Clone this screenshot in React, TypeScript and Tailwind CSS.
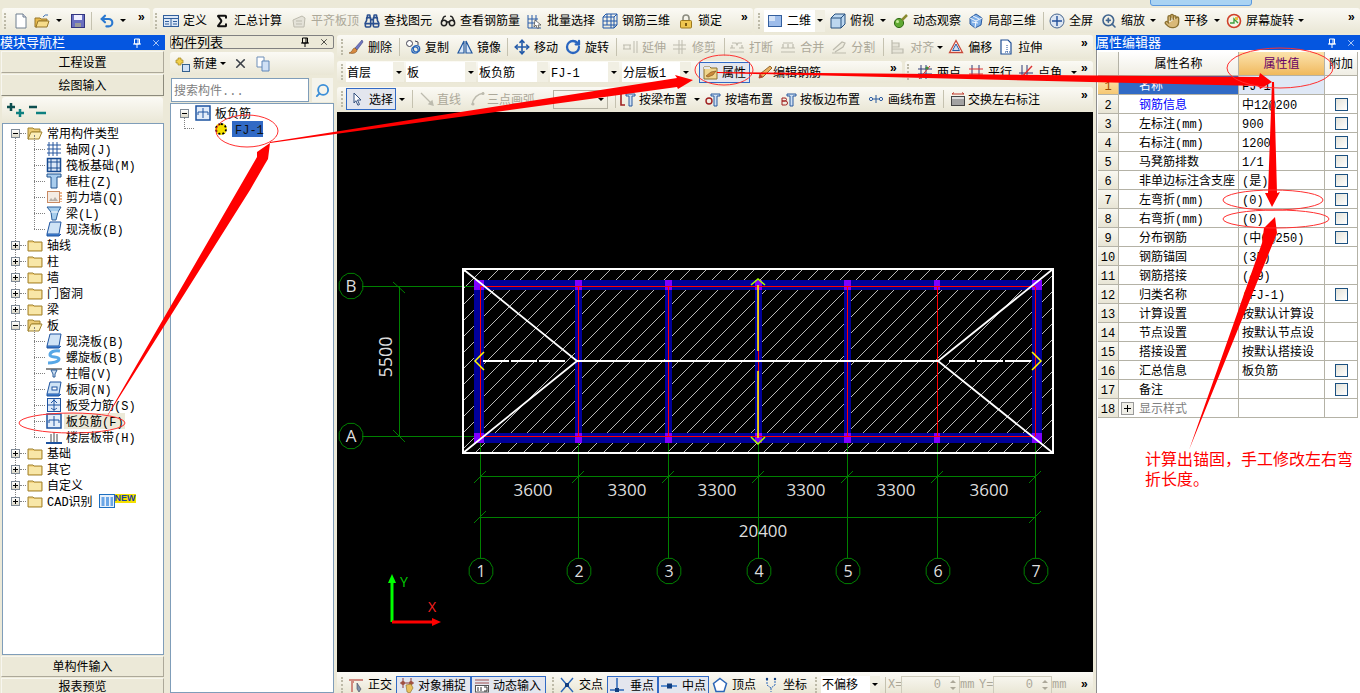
import React from "react";
import clsx from "clsx";
import {
  Binoculars,
  Glasses,
  Move,
  RotateCw,
  Sigma,
  Undo2,
  X,
  ZoomIn,
  Hand,
  Search,
} from "lucide-react";

const FONT = "font-['Liberation_Mono','Noto_Sans_CJK_SC',monospace]";
const BAR = "bg-linear-to-b from-[#fbfaf5] to-[#eae7d6] rounded-[3px]";
const ACTIVE = "bg-[#e3e6ee] border border-[#316ac5]";
// the CJK fallback sits high in the mono line box, this centres it again
const NUDGE = "pt-[3px]";

function I({ children, className }: { children: React.ReactNode; className?: string }) {
  return (
    <svg viewBox="0 0 16 16" className={clsx("w-4 h-4 shrink-0", className)}>
      {children}
    </svg>
  );
}

const Ic = {
  page: (
    <I>
      <path d="M3 1h7l3 3v11H3z" fill="#fff" stroke="#6f7f8f" />
      <path d="M10 1v3h3" fill="#dde" stroke="#6f7f8f" />
    </I>
  ),
  open: (
    <I>
      <path d="M1 5h5l1 1h6v2H5L3 14H1z" fill="#e8b94a" stroke="#96762a" />
      <path d="M4 8h11l-2 6H2z" fill="#f7dc8a" stroke="#96762a" />
      <path d="M9 4q2-3 5-2" fill="none" stroke="#3b6fb5" />
    </I>
  ),
  save: (
    <I>
      <rect x="1.5" y="1.5" width="13" height="13" fill="#6a6fc0" stroke="#33357f" />
      <rect x="4" y="2" width="8" height="5" fill="#eef" />
      <rect x="5" y="10" width="6" height="4" fill="#9a9a9a" />
    </I>
  ),
  undo: <Undo2 size={16} strokeWidth={3.2} className="text-[#2a78d0] shrink-0" />,
  define: (
    <I>
      <rect x="0.5" y="2.5" width="15" height="11" fill="#dce8f7" stroke="#315f9c" />
      <path d="M1 5.5h14M8 6v7M10 8.5h4M10 11h4M2 8.5h4M2 11h4" stroke="#315f9c" fill="none" />
    </I>
  ),
  sigma: <Sigma size={16} strokeWidth={3} className="text-[#111] shrink-0" />,
  flush: (
    <I>
      <path d="M2 7l9-4 3 2-1 9H3z" fill="#e4e2d8" stroke="#bdbbae" />
      <path d="M5 8h6M5 11h6" stroke="#bdbbae" />
    </I>
  ),
  find: <Binoculars size={16} strokeWidth={2.4} className="text-[#2a4f8f] shrink-0" />,
  glasses: <Glasses size={16} strokeWidth={2.2} className="text-[#222] shrink-0" />,
  batch: (
    <I>
      <path d="M1 2v13h13M1 6h10M1 10h8M5 2v13M9 2v8" fill="none" stroke="#2b5da8" />
      <path d="M8 7l6 5-3 0 1 3-2 0-1-3-2 2z" fill="#fff" stroke="#444" strokeWidth="0.7" />
    </I>
  ),
  lattice: (
    <I>
      <path d="M1 4h11v11H1zM1 4l3-3h11v11l-3 3M5 1v11M9 1v14M1 8h14M1 12h14M12 4l3-3" fill="none" stroke="#1f56a8" />
    </I>
  ),
  lock: (
    <I>
      <path d="M5 8V5a3 3 0 016 0v3" fill="none" stroke="#8c8c80" strokeWidth="1.6" />
      <rect x="2.5" y="7.5" width="11" height="7.5" rx="1" fill="#eec650" stroke="#9d7a20" />
      <rect x="7" y="10" width="2" height="3" fill="#7a5a10" />
    </I>
  ),
  two: (
    <I>
      <rect x="1.5" y="2.5" width="13" height="11" fill="#9dbcea" stroke="#345f9e" />
      <rect x="2" y="3" width="6" height="5" fill="#d5e3f7" />
    </I>
  ),
  top: (
    <I>
      <path d="M1 5l4-4h10v10l-4 4H1z" fill="#bcd7ef" stroke="#26507f" />
      <path d="M1 5h10v10M11 5l4-4" fill="none" stroke="#26507f" />
    </I>
  ),
  orbit: (
    <I>
      <circle cx="6" cy="10" r="4.6" fill="#5fa832" stroke="#2f6a15" />
      <path d="M9 7l5-5" stroke="#8a8a30" strokeWidth="2.5" />
      <circle cx="4.5" cy="8.5" r="1.5" fill="#c6ea9a" />
    </I>
  ),
  local3d: (
    <I>
      <path d="M2 5l6-4 6 4-1 7-6 3-5-4z" fill="#7eaee6" stroke="#2a5a9e" />
      <path d="M2 5l6 3 6-3M8 8l-1 7M5 3l6 3M4 9l6 1" fill="none" stroke="#fff" strokeWidth="0.9" />
    </I>
  ),
  full: (
    <I>
      <circle cx="8" cy="8" r="7" fill="#dde6f2" stroke="#47668f" />
      <path d="M8 3v10M3 8h10" stroke="#23509a" strokeWidth="1.4" />
    </I>
  ),
  zoom: <ZoomIn size={16} strokeWidth={2.4} className="text-[#41658f] shrink-0" />,
  pan: <Hand size={16} strokeWidth={2} className="text-[#8a7030] fill-[#d9b978] shrink-0" />,
  spin: (
    <I>
      <circle cx="8" cy="8" r="6.5" fill="#f3f6e6" stroke="#d0402a" strokeWidth="1.6" />
      <path d="M4 10h4V6l4 4" fill="none" stroke="#3f9f3f" strokeWidth="1.4" />
      <rect x="9" y="4" width="3" height="3" fill="#e8c040" />
    </I>
  ),
  brush: (
    <I>
      <path d="M14 1L7 9l2 2 6-8z" fill="#7077c0" stroke="#3a3f80" strokeWidth="0.6" />
      <path d="M7 9c-3 0-2 4-6 5 4 1 8 0 8-3z" fill="#d88a40" stroke="#7a4a1a" strokeWidth="0.6" />
    </I>
  ),
  copy: (
    <I>
      <circle cx="4.5" cy="4.5" r="3" fill="#fff" stroke="#445" />
      <circle cx="10" cy="11" r="3.2" fill="none" stroke="#2a66b8" strokeWidth="1.3" />
      <circle cx="11.5" cy="9.8" r="3.2" fill="none" stroke="#2a66b8" strokeWidth="1.3" />
      <path d="M10 2l3 1v3" fill="none" stroke="#445" />
    </I>
  ),
  mirror: (
    <I>
      <path d="M7 2L1 14h6zM9 2l6 12H9z" fill="#dbe8f8" stroke="#22589f" strokeWidth="1.2" />
    </I>
  ),
  move: <Move size={16} strokeWidth={2.4} className="text-[#2259a8] shrink-0" />,
  rotate: <RotateCw size={16} strokeWidth={3.4} className="text-[#2a66c0] shrink-0" />,
  gExtend: (
    <I>
      <path d="M1 6h8M1 10h8M2 6v4M8 6v4M12 2v12M15 2v12" fill="none" stroke="#bdbbae" />
    </I>
  ),
  gTrim: (
    <I>
      <path d="M1 6h13M1 10h13M7 1v14M10 1v14" fill="none" stroke="#bdbbae" />
    </I>
  ),
  gBreak: (
    <I>
      <path d="M1 13h14M1 9h5M10 9h5M3 4h4l1 2 1-2h4M3 9V6M13 9V6" fill="none" stroke="#bdbbae" strokeWidth="1.2" />
    </I>
  ),
  gMerge: (
    <I>
      <path d="M1 13h14M1 9h14M3 4h10M3 9V5M8 9V5M13 9V5" fill="none" stroke="#bdbbae" strokeWidth="1.2" />
    </I>
  ),
  gSplit: (
    <I>
      <path d="M1 14h14M2 11l9-8 3 1-2 4-8 5" fill="#eeecdf" stroke="#bdbbae" strokeWidth="1.2" />
    </I>
  ),
  gAlign: (
    <I>
      <path d="M2 1v14M2 4h7v4H2M2 10h11v4H2" fill="#e6e4d8" stroke="#bdbbae" strokeWidth="1.2" />
    </I>
  ),
  offset: (
    <I>
      <path d="M8 1.5l6.5 12h-13z" fill="#fff" stroke="#c94a3a" strokeWidth="1.3" />
      <path d="M8 5l3.5 6.5h-7z" fill="#cfe0f5" stroke="#2a5aa0" />
    </I>
  ),
  stretch: (
    <I>
      <path d="M3 1h7l3 3v11H3z" fill="#fff" stroke="#1f4f96" strokeWidth="1.2" />
      <path d="M9 6v7M7 13h6" stroke="#1f4f96" strokeDasharray="1 1" />
    </I>
  ),
  prop: (
    <I>
      <path d="M1 3h6l1 1h6v11H1z" fill="#f0d68e" stroke="#8a7030" />
      <path d="M3 12l5-4 5-1-3 4-5 2z" fill="#c98a3a" stroke="#7a4a1a" strokeWidth="0.6" />
      <rect x="1" y="3" width="6" height="2" fill="#e8e8e8" />
    </I>
  ),
  pencil: (
    <I>
      <path d="M13 2l2 2-9 9-4 1 1-4z" fill="#e8b060" stroke="#8a5a20" strokeWidth="0.9" />
      <path d="M2 14l1-4 3 3z" fill="#c03a2a" />
    </I>
  ),
  twoPt: (
    <I>
      <path d="M4 1v14M9 1v14M1 5h14M1 10h14" stroke="#2f3a78" fill="none" />
      <path d="M2 15L13 2" stroke="#d33" />
      <circle cx="10" cy="4" r="1.6" fill="#3b8f3b" />
    </I>
  ),
  para: (
    <I>
      <path d="M4 1v14M11 1v14" stroke="#2f3a78" fill="none" />
      <path d="M1 5h14M1 10h14" stroke="#d33" fill="none" />
    </I>
  ),
  angle: (
    <I>
      <path d="M4 1v14M9 1v14M1 9h14" stroke="#2f3a78" fill="none" />
      <path d="M2 15L14 2" stroke="#d33" strokeWidth="1.4" />
    </I>
  ),
  cursor: (
    <I>
      <path d="M5 2l7 7H8.5l2 4.5-1.6.7-2-4.5L5 12z" fill="#fff" stroke="#33507f" />
    </I>
  ),
  gLine: (
    <I>
      <path d="M2 2l11 11M14 14l-4-1 3-3z" fill="#bdbbae" stroke="#bdbbae" strokeWidth="1.3" />
    </I>
  ),
  gArc: (
    <I>
      <path d="M2 14C3 7 7 3 14 2" fill="none" stroke="#bdbbae" strokeWidth="1.4" />
      <circle cx="3" cy="13" r="1.5" fill="#bdbbae" />
      <circle cx="13" cy="2.5" r="1.5" fill="#bdbbae" />
    </I>
  ),
  beamL: (
    <I>
      <path d="M1 3v11h4" fill="none" stroke="#a02020" strokeWidth="1.6" />
      <path d="M6 3h9v2H12v10H9V5H6z" fill="#cfe0f3" stroke="#2a5a9e" />
    </I>
  ),
  beamQ: (
    <I>
      <circle cx="4" cy="10" r="3" fill="none" stroke="#a02020" strokeWidth="1.4" />
      <path d="M6 3h9v2H12v10H9V5H6z" fill="#cfe0f3" stroke="#2a5a9e" />
    </I>
  ),
  beamB: (
    <I>
      <path d="M1 7h3a1.5 1.5 0 010 3H1zM1 10h3.5a1.8 1.8 0 010 4H1z" fill="none" stroke="#a02020" />
      <path d="M6 3h9v2H12v10H9V5H6z" fill="#cfe0f3" stroke="#2a5a9e" />
    </I>
  ),
  drawLine: (
    <I>
      <path d="M1 8h14M8 4v8" stroke="#2a5a9e" />
      <circle cx="3" cy="8" r="1.6" fill="#fff" stroke="#2a5a9e" />
      <circle cx="13" cy="8" r="1.6" fill="#fff" stroke="#2a5a9e" />
    </I>
  ),
  swap: (
    <I>
      <rect x="1.5" y="5.5" width="13" height="9" fill="#ddd" stroke="#444" />
      <path d="M3 8v6M5 8v6M7 8v6M9 8v6M11 8v6M13 8v6" stroke="#666" />
      <path d="M2 3h12M2 3l2-1.5M14 3l-2-1.5" stroke="#c0392b" fill="none" />
    </I>
  ),
  ortho: (
    <I>
      <path d="M1 3h14M4 3v12M4 5h2" stroke="#d08a80" strokeWidth="2" fill="none" />
      <path d="M9 6l4 6-2 3-2-3z" fill="#7f93ab" stroke="#445" strokeWidth="0.6" />
    </I>
  ),
  snap: (
    <I>
      <path d="M1 6h14M4 1v10M12 1v10" stroke="#8a3a3a" fill="none" />
      <circle cx="4" cy="6" r="2" fill="#a05040" />
      <circle cx="12" cy="6" r="2" fill="#a05040" />
      <path d="M7 8l5-1 2 4-3 5-3-1z" fill="#e8c060" stroke="#8a6a20" strokeWidth="0.6" />
    </I>
  ),
  dyn: (
    <I>
      <path d="M1 3h14M1 6h14" stroke="#a05050" fill="none" />
      <rect x="1.5" y="8.5" width="13" height="6.5" fill="#fff" stroke="#555" />
      <path d="M4 10v4M7 10v4M10 10h3v4h-3" stroke="#333" fill="none" />
    </I>
  ),
  cross: (
    <I>
      <path d="M2 1l12 14M14 1L2 15" stroke="#2a66b8" strokeWidth="1.4" />
      <rect x="6" y="6" width="4" height="4" fill="#123f80" />
    </I>
  ),
  perp: (
    <I>
      <path d="M8 1v12M1 13h14" stroke="#2a66b8" strokeWidth="1.5" />
      <rect x="6" y="11" width="4" height="4" fill="#123f80" />
    </I>
  ),
  mid: (
    <I>
      <path d="M0 9h16" stroke="#5b8fd0" strokeWidth="2" />
      <rect x="6" y="6.5" width="5" height="5" fill="#123f80" />
    </I>
  ),
  vertex: (
    <I>
      <path d="M8 1.5l6.5 5-2.5 8H4L1.5 6.5z" fill="#fff" stroke="#2a66b8" strokeWidth="1.5" />
    </I>
  ),
  coord: (
    <I>
      <path d="M4 2v6l4 3 4-3V2M8 11v4" fill="none" stroke="#2a66b8" strokeDasharray="2 1" />
      <circle cx="4" cy="2" r="1.2" fill="#123f80" />
      <circle cx="12" cy="2" r="1.2" fill="#123f80" />
    </I>
  ),
};

const TreeIc = {
  folder: (
    <I>
      <path d="M1 4h5l1 1h8v9H1z" fill="#f3d382" stroke="#a0822e" />
      <rect x="2" y="6" width="12" height="7" fill="#f8e7a8" />
    </I>
  ),
  folderOpen: (
    <I>
      <path d="M1 3h5l1 1h6v3H5L2 14H1z" fill="#eccb74" stroke="#a0822e" />
      <path d="M4 7h11l-3 7H1z" fill="#fbeeb9" stroke="#a0822e" />
    </I>
  ),
  grid: (
    <I>
      <path d="M3 1v14M7 1v14M11 1v14M1 4h14M1 8h14M1 12h14" stroke="#27569e" fill="none" />
    </I>
  ),
  raft: (
    <I>
      <rect x="1.5" y="1.5" width="13" height="13" fill="#dbe8f7" stroke="#174a90" strokeWidth="1.5" />
      <path d="M5 1v14M11 1v14M1 5h14M1 11h14" stroke="#174a90" fill="none" />
    </I>
  ),
  column: (
    <I>
      <path d="M1 1h14v3h-4v11H5V4H1z" fill="#a9cdee" stroke="#1f528f" />
    </I>
  ),
  wall: (
    <I>
      <rect x="1.5" y="2.5" width="12" height="11" fill="#f4ece4" stroke="#c98a62" />
      <path d="M3 12l2-3 2 2 2-3 3 4z" fill="#b8b0a8" />
      <path d="M15 3v10" stroke="#d66f1e" strokeDasharray="2 1" />
    </I>
  ),
  beam: (
    <I>
      <path d="M1 2h14l-3 5-2 8H6L5 7z" fill="#a6cdec" stroke="#2c5f9a" />
      <path d="M5 7h7" stroke="#fff" />
    </I>
  ),
  slab: (
    <I>
      <path d="M4 1h11l-2 12H1z" fill="#cfe3f6" stroke="#1d53a0" />
      <path d="M1 13v2h12l2-2" fill="#3a78c8" stroke="#1d53a0" />
    </I>
  ),
  spiral: (
    <I>
      <path d="M14 2C8 1 4 3 4 6s9 1 9 4-7 4-11 4" fill="none" stroke="#57a7e6" strokeWidth="3" />
    </I>
  ),
  cap: (
    <I>
      <path d="M0 3h16v2H0z" fill="#8a8a8a" />
      <path d="M5 5h6l-2 4v3H7V9z" fill="#cfe0f3" stroke="#2c5f9a" />
    </I>
  ),
  hole: (
    <I>
      <path d="M4 1h11l-2 12H1z" fill="#cfe3f6" stroke="#1d53a0" />
      <rect x="6" y="6" width="5" height="3" fill="#fff" stroke="#1d53a0" />
      <path d="M1 13v2h12l2-2" fill="#3a78c8" stroke="#1d53a0" />
    </I>
  ),
  bars: (
    <I>
      <rect x="1.5" y="1.5" width="13" height="13" fill="#e2ecf9" stroke="#1d53a0" />
      <path d="M8 2v12M2 8h12M5 6l3-3 3 3M5 11c2 2 4 2 6 0" fill="none" stroke="#1d53a0" />
    </I>
  ),
  neg: (
    <I>
      <rect x="1" y="1" width="14" height="14" fill="#e2ecf9" stroke="#1d53a0" strokeWidth="1.5" />
      <path d="M3 7h10M3 7v3M13 7v3M8 3v10" fill="none" stroke="#1d53a0" />
    </I>
  ),
  strip: (
    <I>
      <path d="M0 14h16" stroke="#1d53a0" strokeWidth="2" />
      <path d="M5 5v8M8 3v10M11 5v8" stroke="#4a4a4a" fill="none" />
    </I>
  ),
  cad: (
    <I>
      <rect x="0.5" y="1.5" width="15" height="13" fill="#e8f1fb" stroke="#1d6fc0" />
      <path d="M2.5 4h3v9h-3zM7 4h3v9H7zM11.5 4h2.5v9h-2.5z" fill="#6aa6e6" />
    </I>
  ),
};

function Tool({
  icon,
  label,
  gray,
  className,
}: {
  icon: React.ReactNode;
  label: string;
  gray?: boolean;
  className?: string;
}) {
  return (
    <div className={clsx("flex items-center shrink-0 whitespace-nowrap gap-[4px]", gray && "text-[#aca899]", className)}>
      {icon}
      <span className={NUDGE}>{label}</span>
    </div>
  );
}

function Grip({ className }: { className?: string }) {
  return <div className={clsx("w-[3px] h-[16px] shrink-0 border-l-2 border-dotted border-[#bdbaa8]", className)} />;
}

function Sep({ className }: { className?: string }) {
  return <div className={clsx("w-px h-[18px] shrink-0 bg-[#c5c2b0]", className)} />;
}

function Caret({ className }: { className?: string }) {
  return (
    <div className={clsx("w-0 h-0 shrink-0 border-x-[3px] border-t-[3px] border-x-transparent border-t-black", className)} />
  );
}

function More() {
  return <span className="ml-auto mr-[5px] mb-[6px] text-[12px] leading-none font-bold">»</span>;
}

function Combo({ value, width }: { value: string; width: string }) {
  return (
    <div className="flex items-center shrink-0 h-[20px]">
      <div className={clsx("h-full bg-white flex items-center pl-[1px]", NUDGE, width)}>{value}</div>
      <div className="w-[11px] h-full flex items-center justify-center bg-[#f1efe3]">
        <Caret />
      </div>
    </div>
  );
}

function TopToolbar() {
  return (
    <div className="h-[25px] flex">
      <div className={clsx(BAR, "ml-[2px] w-[148px] flex items-center pl-[2px]")}>
        <Grip />
        <div className="ml-[6px]">{Ic.page}</div>
        <div className="ml-[5px]">{Ic.open}</div>
        <Caret className="ml-[6px]" />
        <div className="ml-[8px]">{Ic.save}</div>
        <Sep className="ml-[5px]" />
        <div className="ml-[7px]">{Ic.undo}</div>
        <Caret className="ml-[5px]" />
        <More />
      </div>
      <div className={clsx(BAR, "ml-[3px] w-[600px] flex items-center pl-[2px]")}>
        <Grip />
        <Tool className="ml-[5px]" icon={Ic.define} label="定义" />
        <Tool className="ml-[7px]" icon={Ic.sigma} label="汇总计算" />
        <Tool className="ml-[9px]" gray icon={Ic.flush} label="平齐板顶" />
        <Tool className="ml-[5px]" icon={Ic.find} label="查找图元" />
        <Tool className="ml-[8px]" icon={Ic.glasses} label="查看钢筋量" />
        <Tool className="ml-[7px]" icon={Ic.batch} label="批量选择" />
        <Tool className="ml-[7px]" icon={Ic.lattice} label="钢筋三维" />
        <Tool className="ml-[8px]" icon={Ic.lock} label="锁定" />
        <More />
      </div>
      <div className={clsx(BAR, "ml-[1px] flex-1 flex items-center pl-[4px]")}>
        <Grip />
        <div className="ml-[3px] w-[61px] h-[22px] bg-white flex items-center pl-[3px] shrink-0">
          {Ic.two}
          <span className={clsx("ml-[4px]", NUDGE)}>二维</span>
          <div className="ml-auto w-[10px] h-full flex items-center justify-center bg-[#f1efe3]">
            <Caret />
          </div>
        </div>
        <Tool className="ml-[5px]" icon={Ic.top} label="俯视" />
        <Caret className="ml-[6px]" />
        <Tool className="ml-[7px]" icon={Ic.orbit} label="动态观察" />
        <Tool className="ml-[7px]" icon={Ic.local3d} label="局部三维" />
        <Sep className="ml-[7px]" />
        <Tool className="ml-[5px]" icon={Ic.full} label="全屏" />
        <Tool className="ml-[8px]" icon={Ic.zoom} label="缩放" />
        <Caret className="ml-[5px]" />
        <Tool className="ml-[8px]" icon={Ic.pan} label="平移" />
        <Caret className="ml-[6px]" />
        <Tool className="ml-[6px]" icon={Ic.spin} label="屏幕旋转" />
        <Caret className="ml-[4px]" />
        <More />
      </div>
    </div>
  );
}

function PanelButton({ label, dark, className }: { label: string; dark?: boolean; className?: string }) {
  return (
    <div
      className={clsx(
        "h-[22px] shrink-0 flex items-center justify-center bg-[#ece9d8] border mx-[1px]",
        NUDGE,
        dark ? "border-[#f7f6ef] border-r-[#8c8a7c] border-b-[#8c8a7c]" : "border-[#f7f6ef] border-r-[#aca899] border-b-[#aca899]",
        className,
      )}
    >
      {label}
    </div>
  );
}

function Expander({ open }: { open?: boolean }) {
  return (
    <div className="relative w-[9px] h-[9px] shrink-0 border border-[#7f8a96] bg-linear-to-b from-white to-[#ddd9c8] flex items-center justify-center">
      <div className="absolute w-[5px] h-px bg-black" />
      {!open && <div className="absolute w-px h-[5px] bg-black" />}
    </div>
  );
}

function Group({ label, open, children }: { label: string; open?: boolean; children?: React.ReactNode }) {
  return (
    <div className="h-4 flex items-center pl-[8px]">
      <Expander open={open} />
      <div className="w-[6px] border-t border-dotted border-[#808080]" />
      <div className="ml-[1px]">{open ? TreeIc.folderOpen : TreeIc.folder}</div>
      <span className={clsx("ml-[4px] whitespace-nowrap", NUDGE)}>{label}</span>
      {children}
    </div>
  );
}

function Leaf({ icon, label, selected }: { icon: React.ReactNode; label: string; selected?: boolean }) {
  return (
    <div className="h-4 flex items-center pl-[31px]">
      <div className="w-[11px] border-t border-dotted border-[#808080]" />
      <div className="ml-[1px]">{icon}</div>
      <span className={clsx("ml-[2px] pl-[2px] h-full flex items-center whitespace-nowrap", NUDGE, selected && "bg-[#ece9d8] w-[61px]")}>
        {label}
      </span>
    </div>
  );
}

function Children({ children }: { children: React.ReactNode }) {
  return (
    <div className="relative">
      <div className="absolute left-[31px] -top-[6px] bottom-[8px] border-l border-dotted border-[#808080]" />
      {children}
    </div>
  );
}

function NavPanel() {
  return (
    <div className="w-[165px] shrink-0 flex flex-col pt-[2px]">
      <div className="h-[15px] shrink-0 bg-[#0556e0] text-white text-[13px] leading-[15px] flex items-center">
        <span className="pt-[2px]">模块导航栏</span>
        <PinClose light />
      </div>
      <PanelButton label="工程设置" className="mt-[1px]" />
      <PanelButton dark label="绘图输入" className="mt-[1px]" />
      <div className={clsx(BAR, "mt-[1px] mx-[2px] h-[26px] shrink-0 flex items-center pl-[4px]")}>
        <svg viewBox="0 0 20 16" className="w-[20px] h-[16px]">
          <path d="M1 5h8M5 1v8" stroke="#0d4f4f" strokeWidth="2.5" />
          <path d="M10 11h8M14 7v8" stroke="#0d8080" strokeWidth="2.5" />
        </svg>
        <svg viewBox="0 0 20 16" className="ml-[2px] w-[20px] h-[16px]">
          <path d="M1 5h8" stroke="#0d4f4f" strokeWidth="2.5" />
          <path d="M8 11h10" stroke="#0d8080" strokeWidth="2.5" />
        </svg>
      </div>
      <div className="relative ml-[2px] mr-[1px] h-[532px] shrink-0 bg-white border border-[#7f9db9] pt-[1px] overflow-hidden">
        <div className="absolute left-[12px] top-[9px] h-[368px] border-l border-dotted border-[#808080]" />
        <Group open label="常用构件类型" />
        <Children>
          <Leaf icon={TreeIc.grid} label="轴网(J)" />
          <Leaf icon={TreeIc.raft} label="筏板基础(M)" />
          <Leaf icon={TreeIc.column} label="框柱(Z)" />
          <Leaf icon={TreeIc.wall} label="剪力墙(Q)" />
          <Leaf icon={TreeIc.beam} label="梁(L)" />
          <Leaf icon={TreeIc.slab} label="现浇板(B)" />
        </Children>
        <Group label="轴线" />
        <Group label="柱" />
        <Group label="墙" />
        <Group label="门窗洞" />
        <Group label="梁" />
        <Group open label="板" />
        <Children>
          <Leaf icon={TreeIc.slab} label="现浇板(B)" />
          <Leaf icon={TreeIc.spiral} label="螺旋板(B)" />
          <Leaf icon={TreeIc.cap} label="柱帽(V)" />
          <Leaf icon={TreeIc.hole} label="板洞(N)" />
          <Leaf icon={TreeIc.bars} label="板受力筋(S)" />
          <Leaf icon={TreeIc.neg} label="板负筋(F)" selected />
          <Leaf icon={TreeIc.strip} label="楼层板带(H)" />
        </Children>
        <Group label="基础" />
        <Group label="其它" />
        <Group label="自定义" />
        <Group label="CAD识别">
          <div className="ml-[6px]">{TreeIc.cad}</div>
          <span className="mb-[6px] h-[9px] bg-[#f5e000] text-[#1a3fa0] text-[9px] leading-[9px] font-bold font-['Liberation_Sans',sans-serif]">
            NEW
          </span>
        </Group>
      </div>
      <PanelButton label="单构件输入" className="mt-[1px] !h-[21px]" />
      <PanelButton label="报表预览" className="mt-[1px] !h-[15px] !border-b-0" />
    </div>
  );
}

function PinClose({ light }: { light?: boolean }) {
  return (
    <div className={clsx("ml-auto flex items-center gap-[9px] pr-[4px]", light ? "text-white" : "text-black")}>
      <svg viewBox="0 0 10 10" className="w-[10px] h-[10px]">
        <path d="M2.5 1h5v5h-5zM1 6h8M5 6v4M6 1v5" fill="none" stroke="currentColor" />
      </svg>
      <X size={10} strokeWidth={1.6} />
    </div>
  );
}

function ListPanel() {
  return (
    <div className="w-[164px] ml-[5px] shrink-0 flex flex-col pt-[2px]">
      <div className="h-[14px] shrink-0 border border-[#808080] rounded-[2px] text-[13px] flex items-center leading-none">
        <span className="pt-[2px]">构件列表</span>
        <PinClose />
      </div>
      <div className={clsx(BAR, "mt-[3px] h-[23px] shrink-0 flex items-center pl-[4px]")}>
        <svg viewBox="0 0 16 16" className="w-4 h-4">
          <path d="M2 4h2V2h3v2h2v3H7v2H4V7H2z" fill="#f2cf4a" stroke="#a08420" strokeWidth="0.7" />
          <rect x="8.5" y="8.5" width="7" height="7" fill="#cfe0f5" stroke="#33608f" />
        </svg>
        <span className={clsx("ml-[3px]", NUDGE)}>新建</span>
        <Caret className="ml-[3px]" />
        <X size={15} strokeWidth={2.6} className="ml-[7px] text-[#3b4048]" />
        <svg viewBox="0 0 16 16" className="ml-[7px] w-4 h-4">
          <path d="M2 1h7v10H2z" fill="#fff" stroke="#6f8fb8" />
          <path d="M7 5h7v10H7z" fill="#cfe0f5" stroke="#5f86b8" />
        </svg>
      </div>
      <div className="mt-[3px] h-[24px] shrink-0 flex">
        <div className={clsx("ml-[1px] w-[138px] bg-white border border-[#7f9db9] text-[#808080] flex items-center pl-[2px]", NUDGE)}>
          搜索构件...
        </div>
        <div className="ml-[3px] w-[21px] bg-[#f5f4ec] flex items-center justify-center">
          <Search size={15} strokeWidth={3} className="text-[#3c8fd8] scale-x-[-1]" />
        </div>
      </div>
      <div className="mt-px flex-1 bg-white border border-[#7f9db9] pt-px">
        <div className="h-4 flex items-center pl-[9px]">
          <Expander open />
          <div className="ml-[6px]">{TreeIc.neg}</div>
          <span className={clsx("ml-[4px]", NUDGE)}>板负筋</span>
        </div>
        <div className="h-4 flex items-center pl-[31px] relative">
          <div className="absolute left-[13px] -top-[4px] h-[12px] w-[10px] border-l border-b border-dotted border-[#808080]" />
          <div className="ml-[13px] w-[12px] h-[12px] rounded-full bg-[#f5e000] border-2 border-dotted border-black" />
          <span className={clsx("ml-[5px] px-[3px] h-full w-[31px] bg-[#316ac5] flex items-center whitespace-nowrap text-[#111]", NUDGE)}>
            FJ-1
          </span>
        </div>
      </div>
    </div>
  );
}

const AXES = [480, 578, 668, 758, 847, 937, 1035];
const BEAM_Y = [286.5, 436];

function bubble(cx: number, cy: number, r: number) {
  return Array.from({ length: 12 }, (_, i) => {
    const a = (i / 12) * Math.PI * 2 + Math.PI / 12;
    return `${(cx + r * 0.94 * Math.cos(a)).toFixed(1)},${(cy + r * Math.sin(a)).toFixed(1)}`;
  }).join(" ");
}

function Tick({ x, y }: { x: number; y: number }) {
  return <path d={`M${x - 6} ${y + 6}L${x + 6} ${y - 6}`} stroke="#008000" />;
}

function Canvas() {
  const dims = [
    ["3600", 533],
    ["3300", 627],
    ["3300", 717],
    ["3300", 806],
    ["3300", 896],
    ["3600", 989],
  ] as const;
  return (
    <svg viewBox="337 112 756 560" className="block mt-px w-[756px] h-[560px] shrink-0 bg-black">
      <defs>
        <pattern id="hatch" width="16" height="16" patternUnits="userSpaceOnUse">
          <path d="M0 16L16 0" stroke="#b8b8b8" strokeWidth="1" shapeRendering="crispEdges" />
        </pattern>
      </defs>
      <rect x="463" y="269" width="590" height="184" fill="url(#hatch)" />

      {/* axes */}
      <g fill="none" stroke="#008000" shapeRendering="crispEdges">
        <path d="M362 286.5H480M362 436H480M399 286V436" />
        {AXES.map((x) => (
          <path key={x} d={`M${x} 436V558`} />
        ))}
        <path d="M480 476.5H1035M480 517H1035" />
      </g>
      <path d="M393 282L405 293M393 430L405 442" stroke="#008000" />
      {AXES.map((x) => (
        <Tick key={x} x={x} y={477} />
      ))}
      <Tick x={480} y={517} />
      <Tick x={1035} y={517} />

      {/* beams */}
      <g fill="#000099" shapeRendering="crispEdges">
        <rect x="474" y="280" width="568" height="10" />
        <rect x="474" y="433" width="568" height="10" />
        <rect x="474" y="280" width="10" height="163" />
        <rect x="575" y="280" width="7" height="163" />
        <rect x="665" y="280" width="7" height="163" />
        <rect x="755" y="280" width="7" height="163" />
        <rect x="844" y="280" width="7" height="163" />
        <rect x="1032" y="280" width="10" height="163" />
      </g>
      <g fill="#7f00ff" shapeRendering="crispEdges">
        {[474, 575, 665, 755, 844, 934, 1032].map((x, i) => {
          const w = i === 0 || i === 6 ? 10 : i === 5 ? 6 : 7;
          return (
            <React.Fragment key={x}>
              <rect x={x} y="280" width={w} height="10" />
              <rect x={x} y="433" width={w} height="10" />
            </React.Fragment>
          );
        })}
      </g>
      <g stroke="#ff0000" fill="none" shapeRendering="crispEdges">
        {BEAM_Y.map((y) => (
          <path key={y} d={`M480 ${y}H1035`} />
        ))}
        {AXES.map((x) => (
          <path key={x} d={`M${x} 286.5V436`} />
        ))}
      </g>

      {/* slab */}
      <rect x="463" y="269" width="590" height="184" fill="none" stroke="#fff" strokeWidth="2" />
      <g stroke="#fff" strokeWidth="1.8" fill="none">
        <path d="M463 269L577 361L463 453M1053 269L938 361L1053 453" />
        <path d="M577 361H938" />
        <path d="M483 361H566M949 361H1032" strokeDasharray="26 2" />
      </g>
      <g stroke="#ffff00" fill="none" strokeWidth="1.5">
        <path d="M484 352L475 361L484 370M1032 352L1041 361L1032 370" />
        <path d="M758 285V351M758 371V438" />
      </g>
      <path d="M751 285L758 279L765 285M751 437L758 444L765 437" stroke="#aaff00" fill="none" strokeWidth="1.5" />

      {/* bubbles */}
      <polygon points={bubble(351, 286, 13)} fill="none" stroke="#008000" />
      <polygon points={bubble(351, 436, 13)} fill="none" stroke="#008000" />
      <g fill="#dddddd" fontFamily="'Open Sans',sans-serif">
        <text x="351" y="292" fontSize="17" textAnchor="middle">B</text>
        <text x="351" y="442" fontSize="17" textAnchor="middle">A</text>
        {AXES.map((x, i) => (
          <text key={x} x={x + 1} y="577" fontSize="16" textAnchor="middle">
            {i + 1}
          </text>
        ))}
        {dims.map(([t, x]) => (
          <text key={x} x={x} y="496" fontSize="17" textAnchor="middle">
            {t}
          </text>
        ))}
        <text x="763" y="537" fontSize="17" textAnchor="middle">20400</text>
        <text x="392" y="357" fontSize="18" textAnchor="middle" transform="rotate(-90 392 357)">5500</text>
      </g>
      {AXES.map((x) => (
        <polygon key={x} points={bubble(x + 1, 571, 13)} fill="none" stroke="#008000" />
      ))}

      {/* ucs */}
      <path d="M392 622V580" stroke="#00ff00" strokeWidth="3" />
      <path d="M392 574l-4 9h8z" fill="#00ff00" />
      <path d="M392 622H432" stroke="#ff0000" strokeWidth="3" />
      <path d="M441 622l-9-4v8z" fill="#ff0000" />
      <text x="400" y="587" fontSize="14" fill="#00cc00" fontFamily="'Open Sans',sans-serif">Y</text>
      <text x="428" y="612" fontSize="14" fill="#ff2020" fontFamily="'Open Sans',sans-serif">X</text>
    </svg>
  );
}

function CenterPanel() {
  return (
    <div className="w-[756px] ml-[3px] shrink-0 flex flex-col pt-[2px]">
      <div className={clsx(BAR, "h-[24px] shrink-0 flex items-center pl-[4px]")}>
        <Grip />
        <Tool className="ml-[4px]" icon={Ic.brush} label="删除" />
        <Sep className="ml-[7px]" />
        <Tool className="ml-[5px]" icon={Ic.copy} label="复制" />
        <Tool className="ml-[8px]" icon={Ic.mirror} label="镜像" />
        <Sep className="ml-[6px]" />
        <Tool className="ml-[6px]" icon={Ic.move} label="移动" />
        <Tool className="ml-[7px]" icon={Ic.rotate} label="旋转" />
        <Sep className="ml-[7px]" />
        <Tool className="ml-[5px]" gray icon={Ic.gExtend} label="延伸" />
        <Tool className="ml-[6px]" gray icon={Ic.gTrim} label="修剪" />
        <Sep className="ml-[8px]" />
        <Tool className="ml-[4px]" gray icon={Ic.gBreak} label="打断" />
        <Tool className="ml-[7px]" gray icon={Ic.gMerge} label="合并" />
        <Tool className="ml-[7px]" gray icon={Ic.gSplit} label="分割" />
        <Sep className="ml-[8px]" />
        <Tool className="ml-[6px]" gray icon={Ic.gAlign} label="对齐" />
        <Caret className="ml-[3px] border-t-[#aca899]" />
        <Tool className="ml-[5px]" icon={Ic.offset} label="偏移" />
        <Tool className="ml-[6px]" icon={Ic.stretch} label="拉伸" />
        <More />
      </div>

      <div className="mt-[2px] h-[22px] shrink-0 flex">
        <div className={clsx(BAR, "w-[565px] flex items-center pl-[4px]")}>
          <Grip />
          <div className="ml-[2px]">
            <Combo value="首层" width="w-[47px]" />
          </div>
          <div className="ml-[2px]">
            <Combo value="板" width="w-[59px]" />
          </div>
          <div className="ml-[2px]">
            <Combo value="板负筋" width="w-[59px]" />
          </div>
          <div className="ml-[2px]">
            <Combo value="FJ-1" width="w-[58px]" />
          </div>
          <div className="ml-[3px]">
            <Combo value="分层板1" width="w-[58px]" />
          </div>
          <div className={clsx(ACTIVE, "ml-[8px] w-[51px] h-[21px] flex items-center pl-[3px] shrink-0")}>
            {Ic.prop}
            <span className={clsx("ml-[3px]", NUDGE)}>属性</span>
          </div>
          <Tool className="ml-[7px] !gap-0" icon={Ic.pencil} label="编辑钢筋" />
          <More />
        </div>
        <div className={clsx(BAR, "ml-[3px] flex-1 flex items-center pl-[2px]")}>
          <Grip />
          <Tool className="ml-[7px]" icon={Ic.twoPt} label="两点" />
          <Tool className="ml-[7px]" icon={Ic.para} label="平行" />
          <Tool className="ml-[6px]" icon={Ic.angle} label="点角" />
          <Caret className="ml-[9px]" />
          <More />
        </div>
      </div>

      <div className={clsx(BAR, "mt-[4px] h-[24px] shrink-0 flex items-center pl-[4px]")}>
        <Grip />
        <div className={clsx(ACTIVE, "ml-[2px] w-[50px] h-[22px] flex items-center pl-[2px] shrink-0")}>
          {Ic.cursor}
          <span className={clsx("ml-[4px]", NUDGE)}>选择</span>
        </div>
        <Caret className="ml-[3px]" />
        <Sep className="ml-[7px]" />
        <Tool className="ml-[6px] !gap-[2px]" gray icon={Ic.gLine} label="直线" />
        <Tool className="ml-[9px] !gap-[1px]" gray icon={Ic.gArc} label="三点画弧" />
        <div className="ml-[18px] w-[55px] h-[19px] shrink-0 border border-[#b5b2a3] flex items-center justify-end pr-[3px]">
          <Caret className="border-t-[#aca899]" />
        </div>
        <Sep className="ml-[7px]" />
        <Tool className="ml-[4px] !gap-[3px]" icon={Ic.beamL} label="按梁布置" />
        <Caret className="ml-[7px]" />
        <Tool className="ml-[5px]" icon={Ic.beamQ} label="按墙布置" />
        <Tool className="ml-[8px] !gap-[3px]" icon={Ic.beamB} label="按板边布置" />
        <Tool className="ml-[8px]" icon={Ic.drawLine} label="画线布置" />
        <Sep className="ml-[7px]" />
        <Tool className="ml-[6px] !gap-[2px]" icon={Ic.swap} label="交换左右标注" />
        <More />
      </div>

      <Canvas />

      <div className="h-[21px] shrink-0 flex items-center pl-[4px] pt-[4px] bg-linear-to-b from-[#fbfaf5] to-[#eae7d6]">
        <Grip />
        <Tool className="ml-[4px]" icon={Ic.ortho} label="正交" />
        <div className={clsx(ACTIVE, "ml-[4px] w-[75px] h-[17px] !border-b-0 flex items-center pl-[2px] shrink-0")}>
          {Ic.snap}
          <span className={clsx("ml-[3px]", NUDGE)}>对象捕捉</span>
        </div>
        <div className={clsx(ACTIVE, "w-[75px] h-[17px] !border-b-0 flex items-center pl-[2px] shrink-0")}>
          {Ic.dyn}
          <span className={clsx("ml-[3px]", NUDGE)}>动态输入</span>
        </div>
        <Grip className="ml-[6px]" />
        <Tool className="ml-[4px]" icon={Ic.cross} label="交点" />
        <div className={clsx(ACTIVE, "ml-[4px] w-[51px] h-[17px] !border-b-0 flex items-center pl-[1px] shrink-0")}>
          {Ic.perp}
          <span className={clsx("ml-[5px]", NUDGE)}>垂点</span>
        </div>
        <div className={clsx(ACTIVE, "w-[51px] h-[17px] !border-b-0 flex items-center pl-[2px] shrink-0")}>
          {Ic.mid}
          <span className={clsx("ml-[5px]", NUDGE)}>中点</span>
        </div>
        <Tool className="ml-[3px]" icon={Ic.vertex} label="顶点" />
        <Tool className="ml-[7px]" icon={Ic.coord} label="坐标" />
        <Grip className="ml-[8px]" />
        <div className="ml-[3px] flex items-center h-[17px] shrink-0">
          <div className={clsx("w-[49px] h-full bg-white flex items-center pl-[1px]", NUDGE)}>不偏移</div>
          <div className="w-[10px] h-full bg-[#f1efe3] flex items-center justify-center">
            <Caret />
          </div>
        </div>
        <Sep className="ml-[5px] !h-[16px]" />
        <span className="ml-[2px] w-[12px] text-[#aca899] shrink-0">X=</span>
        <Spin className="ml-[1px]" />
        <span className="w-[12px] text-[#aca899] shrink-0">mm</span>
        <span className="ml-[7px] w-[12px] text-[#aca899] shrink-0">Y=</span>
        <Spin className="ml-[2px]" />
        <span className="w-[12px] text-[#aca899] shrink-0">mm</span>
        <span className="ml-auto mr-[5px] font-bold">»</span>
      </div>
    </div>
  );
}

function Spin({ className }: { className?: string }) {
  return (
    <div className={clsx("w-[59px] h-[17px] shrink-0 flex items-center border border-b-0 border-[#cfccbc] text-[#aca899]", className)}>
      <span className="flex-1 text-right pr-[5px]">0</span>
      <div className="w-[13px] flex flex-col items-center gap-[4px]">
        <div className="w-0 h-0 border-x-[3px] border-b-[3px] border-x-transparent border-b-[#aca899]" />
        <div className="w-0 h-0 border-x-[3px] border-t-[3px] border-x-transparent border-t-[#aca899]" />
      </div>
    </div>
  );
}

type Row = { name: string; value?: string; check?: boolean; blue?: boolean };

const ROWS: Row[] = [
  { name: "名称", value: "FJ-1" },
  { name: "钢筋信息", value: "中12@200", check: true, blue: true },
  { name: "左标注(mm)", value: "900", check: true },
  { name: "右标注(mm)", value: "1200", check: true },
  { name: "马凳筋排数", value: "1/1", check: true },
  { name: "非单边标注含支座", value: "(是)", check: true },
  { name: "左弯折(mm)", value: "(0)", check: true },
  { name: "右弯折(mm)", value: "(0)", check: true },
  { name: "分布钢筋", value: "(中6@250)", check: true },
  { name: "钢筋锚固", value: "(35)" },
  { name: "钢筋搭接", value: "(49)" },
  { name: "归类名称", value: "(FJ-1)", check: true },
  { name: "计算设置", value: "按默认计算设" },
  { name: "节点设置", value: "按默认节点设" },
  { name: "搭接设置", value: "按默认搭接设" },
  { name: "汇总信息", value: "板负筋", check: true },
  { name: "备注", check: true },
];

const CELL = "border-r border-b border-[#b4b2a6] flex items-center";
const INDEX = "bg-linear-to-b from-[#f9f8f1] to-[#e8e5d5] justify-center";

function PropPanel() {
  return (
    <div className="ml-[3px] flex-1 flex flex-col pt-[2px] bg-[#ece9d8] min-w-0">
      <div className="h-[15px] shrink-0 bg-[#0556e0] text-white text-[13px] flex items-center leading-none">
        <span className="pt-[2px]">属性编辑器</span>
        <PinClose light />
      </div>
      <div className="flex-1 bg-white border-l border-[#8d8d8d] pl-[1px] pt-[2px]">
        <div className="grid grid-cols-[21px_120px_86px_33px] grid-rows-[24px] auto-rows-[19px]">
          <div className={clsx(CELL, INDEX)} />
          <div className={clsx(CELL, NUDGE, "justify-center bg-linear-to-b from-white to-[#f0eee4]")}>属性名称</div>
          <div className={clsx(CELL, NUDGE, "justify-center bg-linear-to-b from-[#fbe3ac] to-[#f0b95c] text-[#660066]")}>属性值</div>
          <div className={clsx(CELL, NUDGE, "justify-center bg-linear-to-b from-white to-[#f0eee4]")}>附加</div>
          {ROWS.map((r, i) => (
            <React.Fragment key={r.name}>
              <div className={clsx(CELL, INDEX, NUDGE, i === 0 && "!from-[#fde7b5] !to-[#f6c873] text-[#a04a00]")}>{i + 1}</div>
              <div
                className={clsx(
                  CELL,
                  NUDGE,
                  "pl-[20px]",
                  i === 0 && "bg-[#316ac5] text-white",
                  r.blue && "text-[#0000ff]",
                )}
              >
                {r.name}
              </div>
              <div className={clsx(CELL, NUDGE, "pl-[3px] whitespace-nowrap overflow-hidden", i === 0 && "bg-[#dfe8f6]")}>
                {r.value}
              </div>
              <div className={clsx(CELL, "justify-center")}>
                {r.check && (
                  <div className="w-[13px] h-[13px] border border-[#1c5180] bg-linear-to-br from-[#e4e2d8] to-white" />
                )}
              </div>
            </React.Fragment>
          ))}
          <div className={clsx(CELL, INDEX, NUDGE)}>18</div>
          <div className={clsx(CELL, "pl-[2px] text-[#808080]")}>
            <div className="relative w-[13px] h-[13px] border border-[#9a9a9a] bg-[#f0efe8] flex items-center justify-center">
              <div className="absolute w-[7px] h-px bg-black" />
              <div className="absolute w-px h-[7px] bg-black" />
            </div>
            <span className={clsx("ml-[5px]", NUDGE)}>显示样式</span>
          </div>
          <div className={CELL} />
          <div className={CELL} />
        </div>
        <p className="mt-[30px] ml-[47px] text-[16px] leading-[20px] text-[#ff0000] font-['Noto_Sans_CJK_SC',sans-serif]">
          计算出锚固，手工修改左右弯
          <br />
          折长度。
        </p>
      </div>
    </div>
  );
}

function Annotations() {
  return (
    <svg viewBox="0 0 1360 693" className="absolute inset-0 w-[1360px] h-[693px] pointer-events-none">
      <g fill="#ff0000">
        <polygon points="103,423 257,157 257,152 270,143 268,159 265,164 250,190" />
        <polygon points="270,142 677,78 675,75 693,80 678,89 677,87 270,143" />
        <polygon points="717,72 1259,77 1260,73 1272,82 1260,89 1259,86 717,73" />
        <polygon points="1272,82 1274,82 1277,193 1280,192 1272,207 1265,193 1268,193" />
        <polygon points="1189,450 1262,243 1264,228 1275,217 1277,233 1273,243" />
      </g>
      <g fill="none" stroke="#ff3030">
        <ellipse cx="247" cy="131" rx="31" ry="16" />
        <ellipse cx="72" cy="423" rx="53" ry="10" />
        <ellipse cx="724" cy="70" rx="29" ry="15" />
        <ellipse cx="1280" cy="68" rx="53" ry="20" />
        <ellipse cx="1273" cy="200" rx="50" ry="10" />
        <ellipse cx="1276" cy="219" rx="53" ry="9" />
      </g>
    </svg>
  );
}

export default function App() {
  return (
    <div className={clsx(FONT, "relative w-[1360px] h-[693px] overflow-hidden bg-[#ece9d8] text-[12px] leading-none text-black flex flex-col")}>
      <div className="h-[8px] shrink-0 relative">
        <div className="absolute left-[1150px] -top-[4px] w-[102px] h-[10px] rounded-b-[3px] border border-[#5a98de] bg-[#a9d3f3]" />
      </div>
      <TopToolbar />
      <div className="flex-1 min-h-0 flex">
        <NavPanel />
        <ListPanel />
        <CenterPanel />
        <PropPanel />
      </div>
      <Annotations />
    </div>
  );
}
